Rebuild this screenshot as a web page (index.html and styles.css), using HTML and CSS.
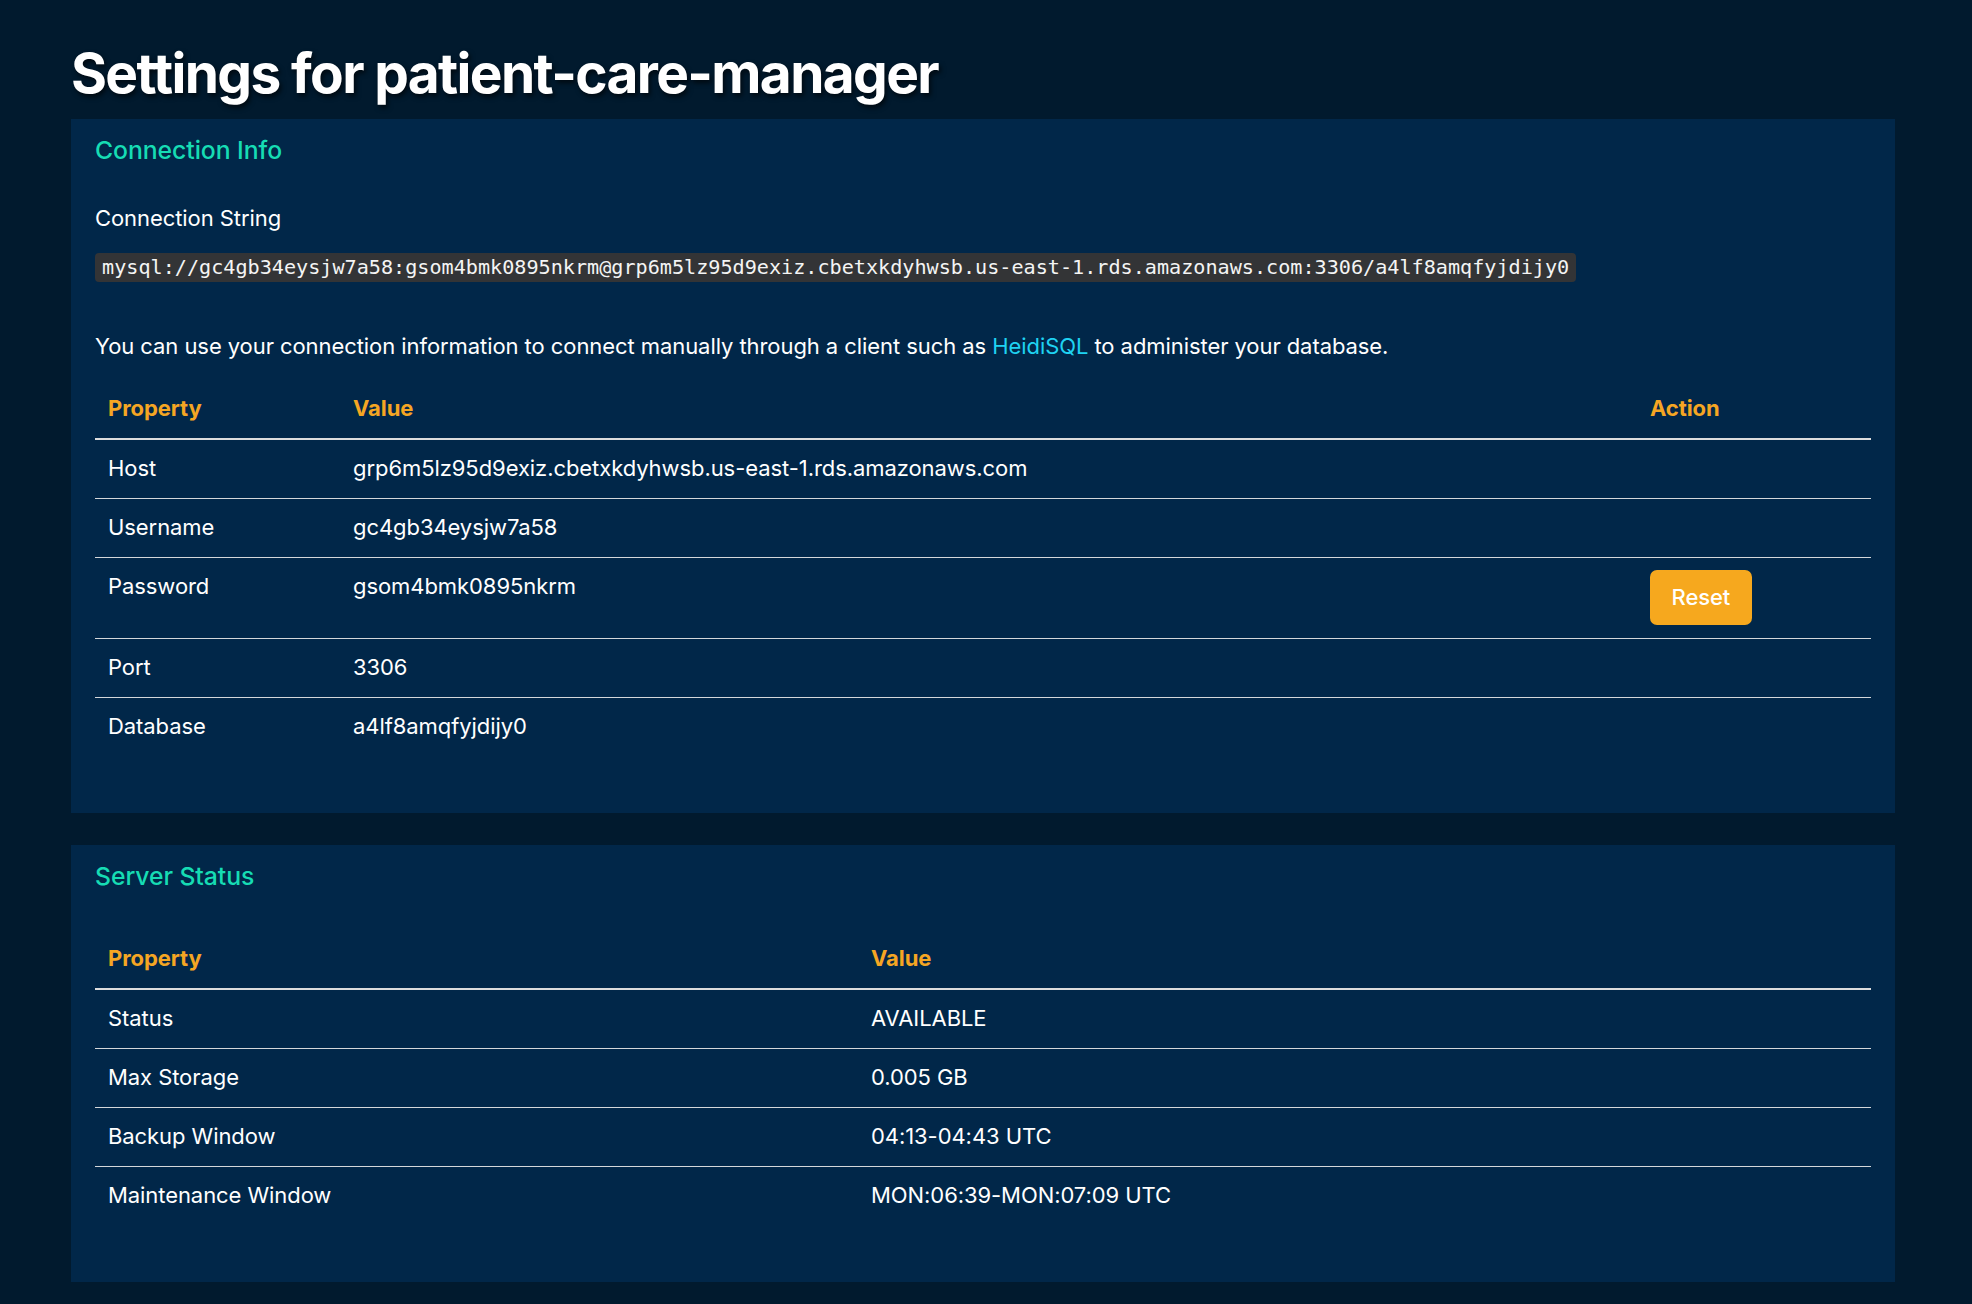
FILE: index.html
```html
<!DOCTYPE html>
<html lang="en">
<head>
<meta charset="utf-8">
<title>Settings for patient-care-manager</title>
<link rel="stylesheet" href="styles.css">
</head>
<body>
<main class="page">
  <h1 class="page-title">Settings for patient-care-manager</h1>

  <section class="card">
    <h2 class="card-title">Connection Info</h2>
    <div class="field-label">Connection String</div>
    <code class="conn-string">mysql://gc4gb34eysjw7a58:gsom4bmk0895nkrm@grp6m5lz95d9exiz.cbetxkdyhwsb.us-east-1.rds.amazonaws.com:3306/a4lf8amqfyjdijy0</code>
    <p class="help">You can use your connection information to connect manually through a client such as <a class="link" href="#">HeidiSQL</a> to administer your database.</p>
    <table class="props props-conn">
      <thead>
        <tr><th class="col-prop">Property</th><th>Value</th><th class="col-action">Action</th></tr>
      </thead>
      <tbody>
        <tr><td>Host</td><td>grp6m5lz95d9exiz.cbetxkdyhwsb.us-east-1.rds.amazonaws.com</td><td></td></tr>
        <tr><td>Username</td><td>gc4gb34eysjw7a58</td><td></td></tr>
        <tr><td>Password</td><td>gsom4bmk0895nkrm</td><td><button class="btn-reset" type="button">Reset</button></td></tr>
        <tr><td>Port</td><td>3306</td><td></td></tr>
        <tr><td>Database</td><td>a4lf8amqfyjdijy0</td><td></td></tr>
      </tbody>
    </table>
  </section>

  <section class="card">
    <h2 class="card-title">Server Status</h2>
    <table class="props props-status">
      <thead>
        <tr><th class="col-prop-wide">Property</th><th>Value</th></tr>
      </thead>
      <tbody>
        <tr><td>Status</td><td>AVAILABLE</td></tr>
        <tr><td>Max Storage</td><td>0.005 GB</td></tr>
        <tr><td>Backup Window</td><td>04:13-04:43 UTC</td></tr>
        <tr><td>Maintenance Window</td><td>MON:06:39-MON:07:09 UTC</td></tr>
      </tbody>
    </table>
  </section>
</main>
</body>
</html>
```

FILE: styles.css
```css
html, body {
  margin: 0;
  padding: 0;
}

body {
  background: #011a2e;
  color: #ffffff;
  font-family: Inter, "Noto Sans", "Liberation Sans", sans-serif;
  font-size: 22px;
  line-height: 33px;
  letter-spacing: -0.07px;
  min-height: 100vh;
}

.page {
  padding: 40px 77px 24px 71px;
}

.page-title {
  margin: 0 0 13px;
  font-size: 55px;
  line-height: 66px;
  font-weight: 700;
  letter-spacing: -0.03em;
  color: #ffffff;
  text-shadow: 2px 3px 5px rgba(0, 0, 0, 0.65);
}

.card {
  background: #012749;
  padding: 16px 24px 24px;
  margin-bottom: 32px;
}

.card-title {
  margin: 0;
  font-size: 24.75px;
  line-height: 30px;
  font-weight: 500;
  color: #16dcb4;
}

.field-label {
  margin-top: 37px;
}

.conn-string {
  display: block;
  width: max-content;
  margin-top: 18px;
  padding: 3px 7px;
  background: #333436;
  border-radius: 4px;
  color: #f4f4f4;
  font-family: "DejaVu Sans Mono", "Liberation Mono", monospace;
  font-size: 20.15px;
  line-height: 23.4px;
  letter-spacing: 0;
}

.help {
  margin: 48px 0 0;
}

.link {
  color: #1fd3f2;
  text-decoration: none;
}

.props {
  width: 100%;
  border-collapse: separate;
  border-spacing: 0;
  margin-top: 16.5px;
  margin-bottom: 33px;
}

.props th,
.props td {
  padding: 12.5px 13px;
  text-align: left;
  vertical-align: top;
  line-height: 33px;
}

.props th {
  color: #f5a623;
  font-weight: 700;
  border-bottom: 2px solid #dddddd;
}

.props tbody tr td {
  border-bottom: 1px solid #d4d7da;
}

.props tbody tr:last-child td {
  border-bottom: none;
}

.col-prop {
  width: 219px;
}

.col-action {
  width: 208px;
}

.col-prop-wide {
  width: 737px;
}

.props-status {
  margin-top: 38.7px;
}

.btn-reset {
  display: block;
  margin: 0;
  padding: 11px 21.5px;
  border: none;
  border-radius: 7px;
  background: #f6a81e;
  color: #ffffff;
  font-family: Inter, "Noto Sans", "Liberation Sans", sans-serif;
  font-size: 22px;
  line-height: 33px;
  font-weight: 500;
  letter-spacing: -0.07px;
}
```
